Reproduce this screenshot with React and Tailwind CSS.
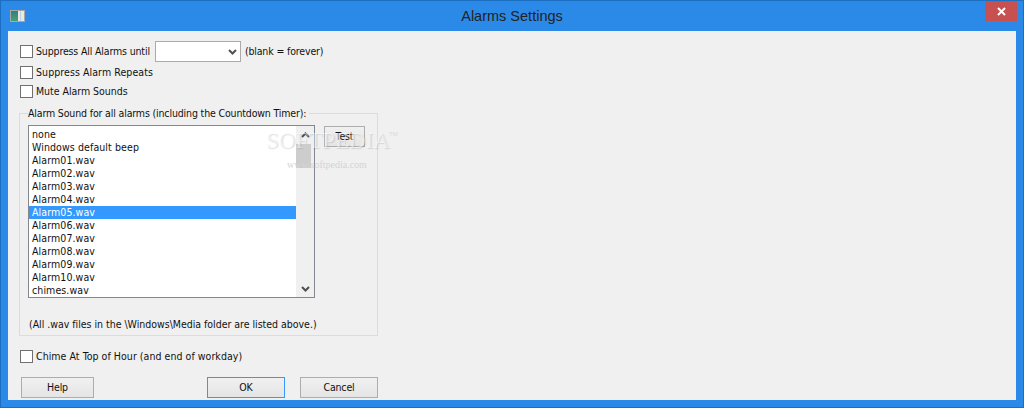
const sounds = ['none', 'Windows default beep', 'Alarm01.wav', 'Alarm02.wav', 'Alarm03.wav', 'Alarm04.wav', 'Alarm05.wav', 'Alarm06.wav', 'Alarm07.wav', 'Alarm08.wav', 'Alarm09.wav', 'Alarm10.wav', 'chimes.wav'];

function Check({ label, className }) {
  return (
    <div className={`flex items-center h-[14px] ml-[1px] ${className}`}>
      <span className="w-[13px] h-[13px] border border-[#707070] bg-white shrink-0" />
      <span className="ml-[3px] whitespace-nowrap">{label}</span>
    </div>
  );
}

function Button({ children, className }) {
  return (
    <div className={`h-[21px] flex items-center justify-center border border-[#adadad] bg-gradient-to-b from-[#f0f0f0] to-[#e5e5e5] ${className}`}>
      {children}
    </div>
  );
}

function Chevron({ up, className }) {
  return (
    <svg width="9" height="6" viewBox="0 0 9 6" className={className}>
      <path d={up ? 'M1 5L4.5 1.5L8 5' : 'M1 1L4.5 4.5L8 1'} fill="none" stroke="#505050" strokeWidth="2" />
    </svg>
  );
}

export default function App() {
  return (
    <div className="w-[1024px] h-[408px] bg-[#2b8ae8] border border-[#1c6fc0] flex flex-col overflow-hidden relative text-[10.5px] leading-[13px] tracking-[-0.15px] text-[#111] font-['DejaVu_Sans_Condensed','Liberation_Sans',sans-serif]">
      <div className="h-[30px] flex items-center shrink-0 relative">
        <div className="ml-[9px] mb-[1px] w-[15px] h-[12px] border border-[#a8a8a8] bg-[#e8e8e8] flex">
          <div className="w-[7px] bg-gradient-to-b from-[#2f8080] to-[#4a9f70]" />
          <div className="w-[1px] ml-[2px] bg-[#c0d0d8]" />
        </div>
        <div className="absolute left-0 right-0 top-[7px] text-center text-[14.5px] leading-[16px] tracking-normal text-[#222] font-['Liberation_Sans',sans-serif]">Alarms Settings</div>
        <div className="absolute top-0 right-[6px] w-[32px] h-[20px] bg-[#c75050] flex items-center justify-center">
          <svg width="9" height="9" viewBox="0 0 9 9">
            <path d="M1 1L8 8M8 1L1 8" stroke="#fff" strokeWidth="2" />
          </svg>
        </div>
      </div>

      <div className="mx-[7px] h-[369px] bg-[#f0f0f0] pl-[11px] pt-[10px] flex flex-col">
        <div className="flex items-center h-[21px]">
          <Check label="Suppress All Alarms until" />
          <div className="ml-[5px] w-[86px] h-[21px] bg-white border border-[#ababab] flex items-center justify-end pr-[3px] shrink-0">
            <Chevron />
          </div>
          <span className="ml-[4px] whitespace-nowrap">(blank = forever)</span>
        </div>
        <Check label="Suppress Alarm Repeats" className="mt-[3px] tracking-[0.08px]" />
        <Check label="Mute Alarm Sounds" className="mt-[5px] tracking-[-0.03px]" />

        <div className="mt-[15px] w-[359px] h-[223px] border border-[#dcdcdc] relative pl-[8px] pt-[11px]">
          <span className="absolute left-[8px] top-[-7px] bg-[#f0f0f0] whitespace-nowrap pr-[3px]">Alarm Sound for all alarms (including the Countdown Timer):</span>
          <div className="flex items-start">
            <div className="w-[287px] h-[173px] border border-[#828790] bg-white flex shrink-0">
              <div className="w-[267px] pt-[2px] tracking-[0.1px]">
                {sounds.map((s) => (
                  <div key={s} className={`h-[13px] pl-[3px] whitespace-nowrap ${s === 'Alarm05.wav' ? 'bg-[#3399ff] text-white' : ''}`}>{s}</div>
                ))}
              </div>
              <div className="w-[18px] bg-[#f0f0f0] flex flex-col items-center">
                <div className="h-[18px] flex items-center justify-center"><Chevron up /></div>
                <div className="self-start w-[15px] h-[24px] bg-[#cdcdcd]" />
                <div className="flex-1" />
                <div className="h-[17px] flex items-center justify-center"><Chevron /></div>
              </div>
            </div>
            <Button className="ml-[9px] mt-[1px] w-[41px]">Test</Button>
          </div>
          <div className="mt-[20px] pl-[1px] whitespace-nowrap tracking-[-0.02px]">(All .wav files in the \Windows\Media folder are listed above.)</div>
        </div>

        <Check label="Chime At Top of Hour (and end of workday)" className="mt-[13px] tracking-[0.05px]" />

        <div className="mt-[14px] flex">
          <Button className="ml-[2px] w-[73px]">Help</Button>
          <Button className="ml-[113px] w-[78px] !border-[#3399ff]">OK</Button>
          <Button className="ml-[15px] w-[78px]">Cancel</Button>
        </div>
      </div>

      <div className="absolute left-[265px] top-[127px] text-[23px] leading-[26px] tracking-normal text-white/50 font-['Liberation_Serif',serif] [text-shadow:1px_1px_1px_rgba(120,120,120,0.25)] whitespace-nowrap">SOFTPEDIA</div>
      <div className="absolute left-[388px] top-[129px] text-[6px] leading-[8px] tracking-normal text-[#d8d8d8] font-['Liberation_Sans',sans-serif]">TM</div>
      <div className="absolute left-[286px] top-[158px] text-[10px] leading-[12px] tracking-normal text-[#d4d4d4] font-['Liberation_Serif',serif] whitespace-nowrap">www.softpedia.com</div>
    </div>
  );
}
